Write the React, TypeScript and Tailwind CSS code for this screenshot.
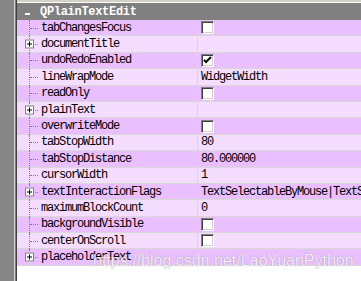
import React from "react";

type Prop = {
  name: string;
  value?: string;
  check?: boolean | null;
  expandable?: boolean;
};

const props: Prop[] = [
  { name: "tabChangesFocus", check: false },
  { name: "documentTitle", expandable: true },
  { name: "undoRedoEnabled", check: true },
  { name: "lineWrapMode", value: "WidgetWidth" },
  { name: "readOnly", check: false },
  { name: "plainText", expandable: true },
  { name: "overwriteMode", check: false },
  { name: "tabStopWidth", value: "80" },
  { name: "tabStopDistance", value: "80.000000" },
  { name: "cursorWidth", value: "1" },
  { name: "textInteractionFlags", value: "TextSelectableByMouse|TextSelectableByKeyboard", expandable: true },
  { name: "maximumBlockCount", value: "0" },
  { name: "backgroundVisible", check: false },
  { name: "centerOnScroll", check: false },
  { name: "placeholderText", expandable: true },
];

const mono = "font-['Liberation_Mono','DejaVu_Sans_Mono',monospace]";

function CheckBox({ checked }: { checked: boolean }) {
  return (
    <div className="flex h-[13px] w-[13px] items-center justify-center border border-t-[#808080] border-l-[#808080] border-b-white border-r-white bg-white shadow-[inset_1px_1px_0_#404040,inset_-1px_-1px_0_#d4d0c8]">
      {checked && (
        <svg width="9" height="9" viewBox="0 0 9 9" className="mt-[1px]">
          <path d="M1 4 L3 6 L8 1" fill="none" stroke="#000" strokeWidth="2" />
        </svg>
      )}
    </div>
  );
}

function Row({ p, index, last }: { p: Prop; index: number; last: boolean }) {
  const bg = index % 2 === 0 ? "bg-[#eabfff]" : "bg-[#f4ddff]";
  return (
    <div className={`flex h-[16.4px] shrink-0 border-b border-[#d8d8d8] ${bg}`}>
      <div className="relative flex w-[180px] shrink-0 items-center pl-[24px]">
        {/* tree lines */}
        <div className={`absolute left-[12px] top-0 border-l border-dotted border-[#808080] ${last ? "h-1/2" : "bottom-[-1px]"}`} />
        <div className="absolute left-[13px] top-1/2 w-[8px] border-t border-dotted border-[#808080]" />
        {p.expandable && (
          <div className="absolute left-[8px] top-1/2 flex h-[9px] w-[9px] -translate-y-1/2 items-center justify-center border border-[#808080] bg-white">
            <div className="relative h-[5px] w-[5px]">
              <div className="absolute left-0 top-[2px] h-px w-[5px] bg-black" />
              <div className="absolute left-[2px] top-0 h-[5px] w-px bg-black" />
            </div>
          </div>
        )}
        <span className={`${mono} whitespace-nowrap text-[12px] leading-none tracking-[-1.2px] text-black`}>
          {p.name}
        </span>
      </div>
      <div className="w-px shrink-0 bg-[#d8d8d8]" />
      <div className="flex min-w-0 flex-1 items-center overflow-hidden pl-[3px]">
        {p.check !== undefined && p.check !== null && <CheckBox checked={p.check} />}
        {p.value && (
          <span className={`${mono} whitespace-nowrap text-[12px] leading-none tracking-[-1.2px] text-black`}>
            {p.value}
          </span>
        )}
      </div>
    </div>
  );
}

export default function App() {
  return (
    <div className="relative flex h-[281px] w-[361px] overflow-hidden bg-white">
      {/* left frame */}
      <div className="w-[14px] shrink-0 bg-[#868686]" />
      <div className="w-px shrink-0 bg-[#d4d0c8]" />
      <div className="w-px shrink-0 bg-[#808080]" />
      <div className="w-px shrink-0 bg-[#404040]" />

      <div className="flex min-w-0 flex-1 flex-col">
        <div className="h-[2px] shrink-0 bg-[#d4d0c8]" />
        <div className="h-px shrink-0 bg-white" />
        <div className="relative flex h-[17px] shrink-0 items-center bg-[#808080] pl-[23px]">
          <div className="absolute left-[8px] top-[10px] h-[2px] w-[5px] bg-white" />
          <span className={`${mono} whitespace-nowrap text-[12px] font-bold leading-none tracking-[-0.3px] text-white`}>
            QPlainTextEdit
          </span>
        </div>
        {props.map((p, i) => (
          <Row key={p.name} p={p} index={i} last={i === props.length - 1} />
        ))}
        <div className="flex-1 bg-white" />
      </div>

      {/* watermark */}
      <div className="pointer-events-none absolute left-[93px] top-[253px] whitespace-nowrap font-['Liberation_Sans',Arial,sans-serif] text-[16px] leading-none text-white/90 [text-shadow:0_0_1px_rgba(0,0,0,0.45)]">
        https://blog.csdn.net/LaoYuanPython
      </div>
    </div>
  );
}
